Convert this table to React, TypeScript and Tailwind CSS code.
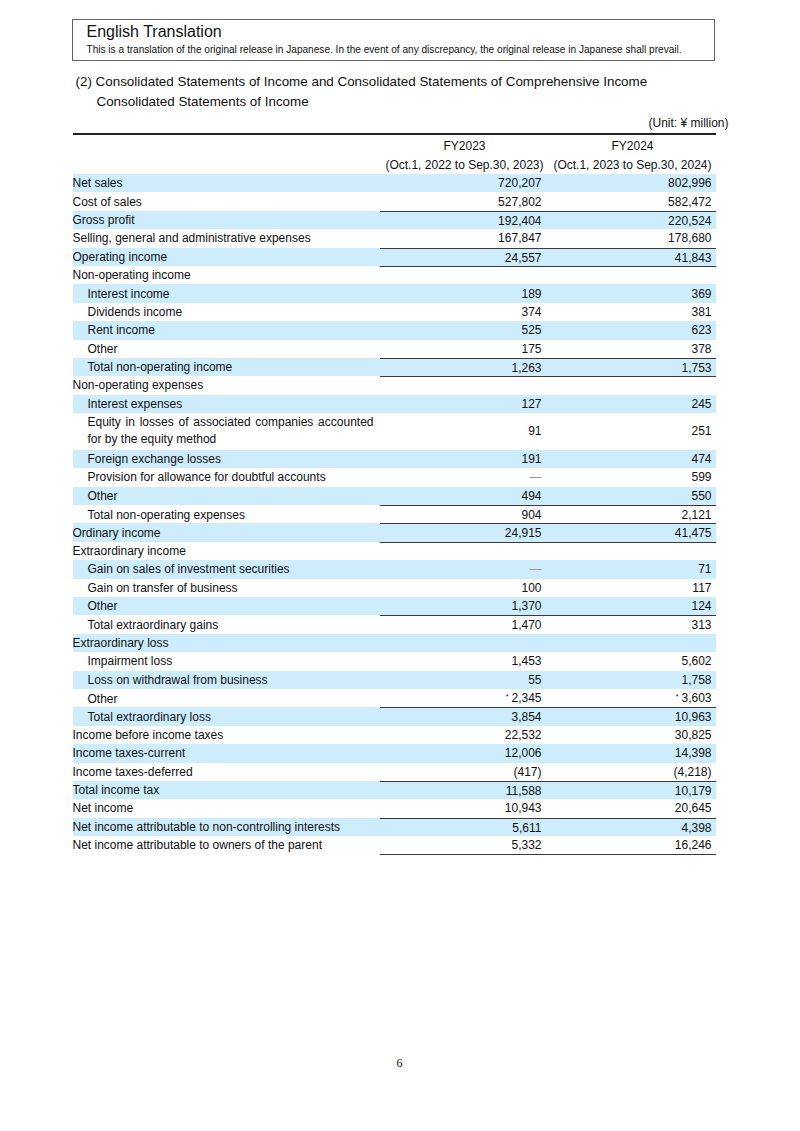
type Row = {
  label: string;
  indent?: boolean;
  a?: string;
  b?: string;
  top?: boolean;
  tall?: boolean;
};

const rows: Row[] = [
  { label: "Net sales", a: "720,207", b: "802,996" },
  { label: "Cost of sales", a: "527,802", b: "582,472" },
  { label: "Gross profit", a: "192,404", b: "220,524", top: true },
  { label: "Selling, general and administrative expenses", a: "167,847", b: "178,680" },
  { label: "Operating income", a: "24,557", b: "41,843", top: true },
  { label: "Non-operating income", top: true },
  { label: "Interest income", indent: true, a: "189", b: "369" },
  { label: "Dividends income", indent: true, a: "374", b: "381" },
  { label: "Rent income", indent: true, a: "525", b: "623" },
  { label: "Other", indent: true, a: "175", b: "378" },
  { label: "Total non-operating income", indent: true, a: "1,263", b: "1,753", top: true },
  { label: "Non-operating expenses", top: true },
  { label: "Interest expenses", indent: true, a: "127", b: "245" },
  {
    label: "Equity in losses of associated companies accounted for by the equity method",
    indent: true,
    a: "91",
    b: "251",
    tall: true,
  },
  { label: "Foreign exchange losses", indent: true, a: "191", b: "474" },
  { label: "Provision for allowance for doubtful accounts", indent: true, a: "-", b: "599" },
  { label: "Other", indent: true, a: "494", b: "550" },
  { label: "Total non-operating expenses", indent: true, a: "904", b: "2,121", top: true },
  { label: "Ordinary income", a: "24,915", b: "41,475", top: true },
  { label: "Extraordinary income", top: true },
  { label: "Gain on sales of investment securities", indent: true, a: "-", b: "71" },
  { label: "Gain on transfer of business", indent: true, a: "100", b: "117" },
  { label: "Other", indent: true, a: "1,370", b: "124" },
  { label: "Total extraordinary gains", indent: true, a: "1,470", b: "313", top: true },
  { label: "Extraordinary loss" },
  { label: "Impairment loss", indent: true, a: "1,453", b: "5,602" },
  { label: "Loss on withdrawal from business", indent: true, a: "55", b: "1,758" },
  { label: "Other", indent: true, a: "*2,345", b: "*3,603" },
  { label: "Total extraordinary loss", indent: true, a: "3,854", b: "10,963", top: true },
  { label: "Income before income taxes", a: "22,532", b: "30,825" },
  { label: "Income taxes-current", a: "12,006", b: "14,398" },
  { label: "Income taxes-deferred", a: "(417)", b: "(4,218)" },
  { label: "Total income tax", a: "11,588", b: "10,179", top: true },
  { label: "Net income", a: "10,943", b: "20,645" },
  { label: "Net income attributable to non-controlling interests", a: "5,611", b: "4,398", top: true },
  { label: "Net income attributable to owners of the parent", a: "5,332", b: "16,246" },
];

const Value = ({ v }: { v?: string }) => {
  if (!v) return null;
  if (v === "-") return <span className="text-[#9a9a9a]">—</span>;
  if (v.startsWith("*"))
    return (
      <span>
        <span className="relative -top-[3px] mr-[3px] text-[7px]">*</span>
        {v.slice(1)}
      </span>
    );
  return <span>{v}</span>;
};

export default function App() {
  return (
    <div className="min-h-[1131px] bg-white text-[#111]" style={{ fontFamily: '"Liberation Sans", Arial, sans-serif' }}>
      <div className="mx-auto w-[657px] pt-[19px]">
        {/* header box */}
        <div className="h-[42px] w-[643px] border border-[#666] pl-[14px] pt-[2px]">
          <div className="text-[16px] leading-[19px]">English Translation</div>
          <div className="text-[10.1px] leading-[14px] mt-[2px]">
            This is a translation of the original release in Japanese. In the event of any discrepancy, the original release in Japanese shall prevail.
          </div>
        </div>

        {/* titles */}
        <div className="mt-[11px] text-[13.4px] leading-[20px]">
          <div className="pl-[4px]">(2) Consolidated Statements of Income and Consolidated Statements of Comprehensive Income</div>
          <div className="pl-[25px]">Consolidated Statements of Income</div>
        </div>
        <div className="mt-[3px] text-right text-[12px] leading-[16px]">(Unit: ¥ million)</div>

        {/* table */}
        <div className="ml-[1px] mt-[2px] w-[643px] text-[12px]">
          <div className="h-[2px] bg-[#222]" />
          <div className="grid h-[39px] grid-cols-[307px_170px_166px] pt-[2px] leading-[18.5px]">
            <div />
            <div className="text-center">
              <div>FY2023</div>
              <div>(Oct.1, 2022 to Sep.30, 2023)</div>
            </div>
            <div className="text-center">
              <div>FY2024</div>
              <div>(Oct.1, 2023 to Sep.30, 2024)</div>
            </div>
          </div>
          {rows.map((r, i) => {
            const bg = i % 2 === 0 ? "bg-[#cdedfc]" : "bg-white";
            const h = r.tall ? "h-[36.8px]" : "h-[18.4px]";
            const line = r.top ? "border-t border-[#3a3a3a]" : "";
            return (
              <div key={i} className={`grid grid-cols-[307px_170px_166px] ${bg} ${h}`}>
                <div
                  className={`flex items-center ${r.indent ? "pl-[15px]" : "pl-0"} ${
                    r.tall ? "leading-[17.5px] pr-[6px]" : "leading-[18px]"
                  }`}
                >
                  <span className={r.tall ? "text-justify [text-align-last:left]" : ""}>{r.label}</span>
                </div>
                <div className={`flex items-center justify-end pr-[8px] leading-[18px] ${line}`}>
                  <Value v={r.a} />
                </div>
                <div className={`flex items-center justify-end pr-[4px] leading-[18px] ${line}`}>
                  <Value v={r.b} />
                </div>
              </div>
            );
          })}
          <div className="grid grid-cols-[307px_336px]">
            <div />
            <div className="h-px bg-[#3a3a3a]" />
          </div>
        </div>

        <div
          className="mt-[200px] text-center text-[12px] leading-[16px] pr-[1px]"
          style={{ fontFamily: '"Liberation Serif", "Times New Roman", serif' }}
        >
          6
        </div>
      </div>
    </div>
  );
}
